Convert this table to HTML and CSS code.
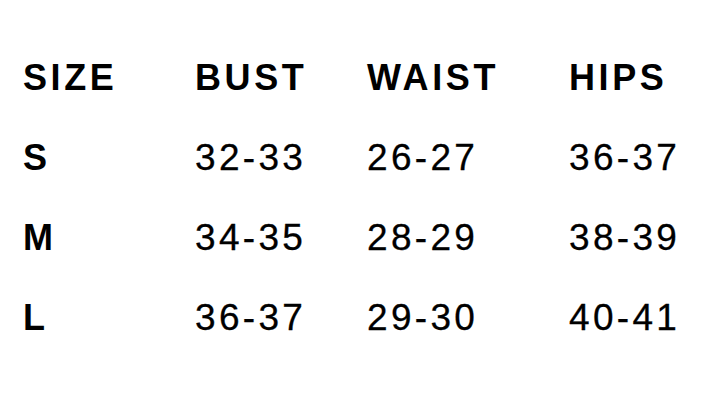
FILE: index.html
```html
<!DOCTYPE html>
<html lang="en">
<head>
<meta charset="utf-8">
<title>Size chart</title>
<link rel="stylesheet" href="styles.css">
</head>
<body>
<div class="chart">
  <div class="head">SIZE</div><div class="head">BUST</div><div class="head">WAIST</div><div class="head">HIPS</div>
  <div class="label">S</div><div class="val">32-33</div><div class="val">26-27</div><div class="val">36-37</div>
  <div class="label">M</div><div class="val">34-35</div><div class="val">28-29</div><div class="val">38-39</div>
  <div class="label">L</div><div class="val">36-37</div><div class="val">29-30</div><div class="val">40-41</div>
</div>
</body>
</html>
```
FILE: styles.css
```css
html, body {
  margin: 0;
  padding: 0;
  background: #fff;
}
body {
  width: 720px;
  height: 400px;
  overflow: hidden;
  font-family: "Liberation Sans", Arial, sans-serif;
  color: #000;
}
.chart {
  display: grid;
  grid-template-columns: 172px 172px 202px auto;
  grid-auto-rows: 80px;
  padding: 38px 0 0 23px;
}
.head, .label {
  font-weight: 700;
  font-size: 36px;
  line-height: 80px;
  letter-spacing: 3.6px;
}
.val {
  font-weight: 400;
  font-size: 37px;
  line-height: 80px;
  letter-spacing: 3.3px;
  -webkit-text-stroke: 0.3px #000;
}
```
